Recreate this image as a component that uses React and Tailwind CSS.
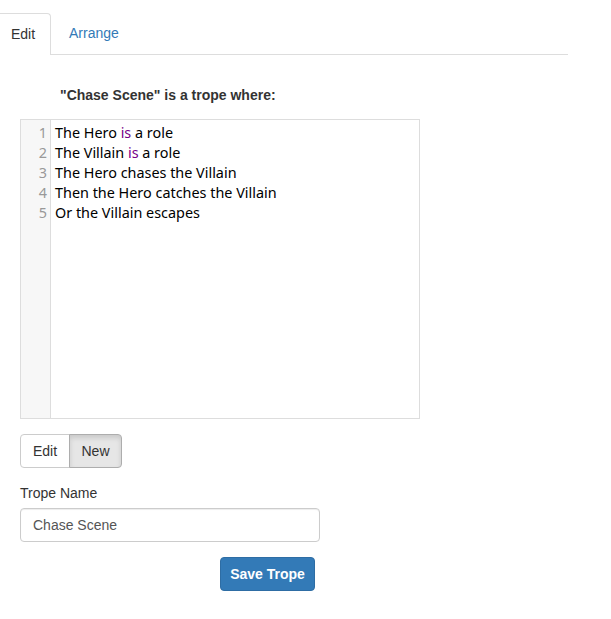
import React from 'react';

const lines = [
  ['The Hero ', 'is', ' a role'],
  ['The Villain ', 'is', ' a role'],
  ['The Hero chases the Villain'],
  ['Then the Hero catches the Villain'],
  ['Or the Villain escapes'],
];

export default function App() {
  return (
    <div className="w-[611px] h-[619px] bg-white text-[14px] text-[#333] font-['Liberation_Sans',Arial,sans-serif]">
      <div className="w-[568px] pt-[13px] flex border-b border-[#ddd]">
        <div className="h-[42px] w-[51px] -mb-px flex items-center pl-[11px] bg-white border-t border-r border-[#ddd] rounded-tr">
          Edit
        </div>
        <div className="h-[41px] flex items-center pl-[18px] text-[#337ab7]">Arrange</div>
      </div>

      <div className="px-5">
        <div className="pt-[30px] pl-10 font-bold leading-5">"Chase Scene" is a trope where:</div>

        <div className="mt-[14px] w-[400px] h-[300px] border border-[#ddd] flex text-[14.4px] font-['Noto_Sans',sans-serif]">
          <div className="w-[30px] bg-[#f7f7f7] border-r border-[#ddd] pt-[3px] text-right pr-[3px] text-[#999] leading-5">
            {lines.map((_, i) => (
              <div key={i}>{i + 1}</div>
            ))}
          </div>
          <div className="pt-[3px] pl-1 text-black leading-5">
            {lines.map((parts, i) => (
              <div key={i}>
                {parts.map((p, j) => (
                  <span key={j} className={p === 'is' ? 'text-[#708]' : ''}>{p}</span>
                ))}
              </div>
            ))}
          </div>
        </div>

        <div className="mt-[15px] flex">
          <button className="h-[34px] w-[50px] border border-[#ccc] rounded-l bg-white text-[#333]">Edit</button>
          <button className="h-[34px] w-[53px] -ml-px border border-[#adadad] rounded-r bg-[#e6e6e6] text-[#333] shadow-[inset_0_3px_5px_rgba(0,0,0,0.125)]">New</button>
        </div>

        <div className="mt-[15px] font-medium leading-5">Trope Name</div>
        <div className="mt-[5px] w-[300px] h-[34px] border border-[#ccc] rounded flex items-center px-3 text-[#555] shadow-[inset_0_1px_1px_rgba(0,0,0,0.075)]">
          Chase Scene
        </div>

        <div className="mt-[15px] w-[295px] flex justify-end">
          <button className="h-[34px] w-[95px] rounded bg-[#337ab7] border border-[#2e6da4] text-white font-bold">Save Trope</button>
        </div>
      </div>
    </div>
  );
}
